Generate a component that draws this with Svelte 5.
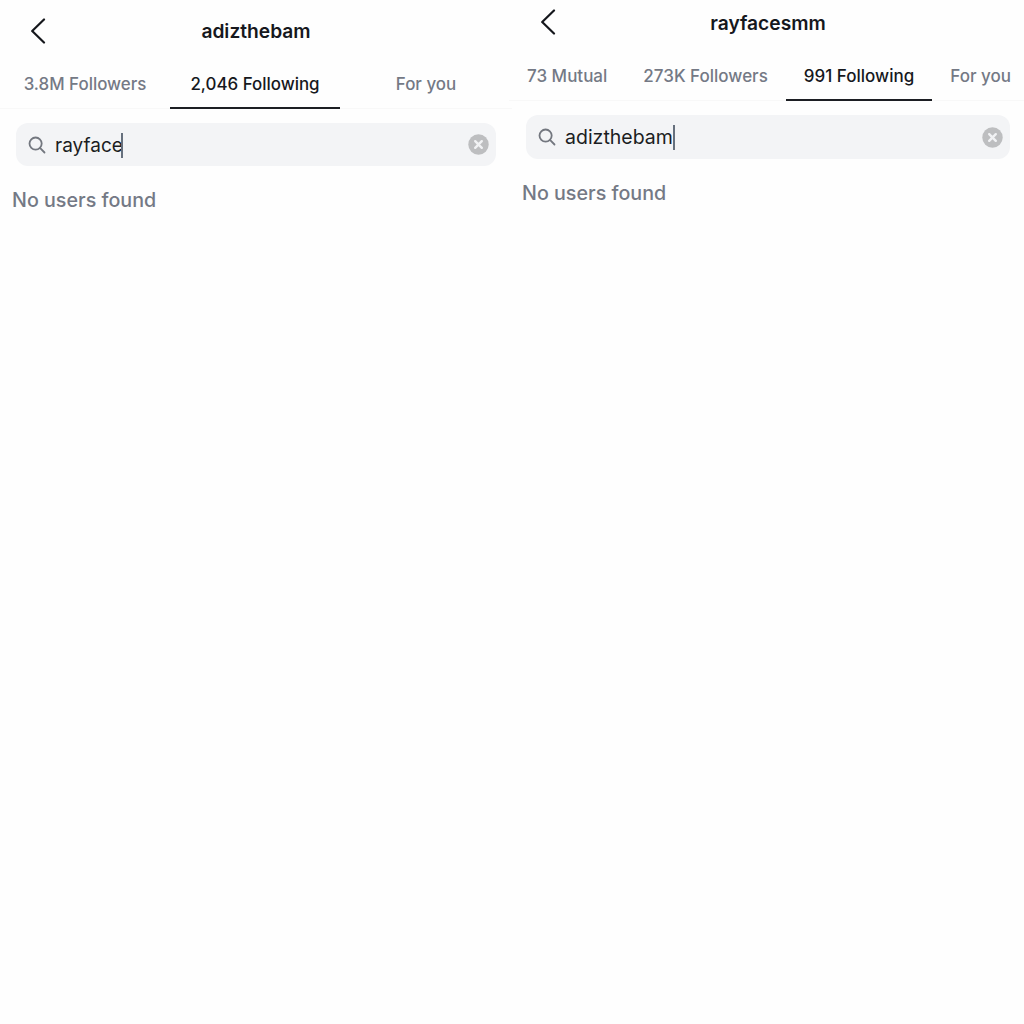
<script>
  const panels = [
    {
      name: "adizthebam",
      query: "rayface",
      kind: "left",
      tabs: [
        { label: "3.8M Followers" },
        { label: "2,046 Following", active: true },
        { label: "For you" }
      ]
    },
    {
      name: "rayfacesmm",
      query: "adizthebam",
      kind: "right",
      tabs: [
        { label: "73 Mutual" },
        { label: "273K Followers" },
        { label: "991 Following", active: true },
        { label: "For you" }
      ]
    }
  ];
</script>

<div class="page">
  {#each panels as panel}
    <section class="panel {panel.kind}">
      <header class="top">
        <svg class="back" width="16" height="26" viewBox="0 0 16 26" fill="none" stroke="#15171c" stroke-width="2.2" stroke-linecap="round" stroke-linejoin="round">
          <path d="M14 1.5 2.2 13 14 24.5" />
        </svg>
        <h1>{panel.name}</h1>
      </header>

      <nav class="tabs">
        {#each panel.tabs as tab}
          <div class="tab" class:active={tab.active}>{tab.label}</div>
        {/each}
      </nav>

      <div class="search">
        <svg width="18" height="18" viewBox="0 0 18 18" fill="none" stroke="#73777f" stroke-width="1.8" stroke-linecap="round">
          <circle cx="7.6" cy="7.6" r="6.1" />
          <path d="m12.2 12.2 4.3 4.3" />
        </svg>
        <div class="query">{panel.query}<span class="caret"></span></div>
        <svg class="clear" width="21" height="21" viewBox="0 0 21 21">
          <circle cx="10.5" cy="10.5" r="10.2" fill="#bdbec0" />
          <path d="m7.2 7.2 6.6 6.6M13.8 7.2l-6.6 6.6" stroke="#f1f2f4" stroke-width="2.4" stroke-linecap="round" />
        </svg>
      </div>

      <p class="empty">No users found</p>
    </section>
  {/each}
</div>

<style>
  :global(body) {
    background: #fff;
  }

  .page {
    display: grid;
    grid-template-columns: 512px 512px;
    width: 1024px;
    height: 1024px;
    overflow: hidden;
    font-family: Inter, "Liberation Sans", sans-serif;
    background: #fefefe;
  }

  .panel {
    min-width: 0;
  }

  .left {
    padding-top: 13px;
  }

  .right {
    padding-top: 5px;
  }

  .top {
    position: relative;
    display: flex;
    align-items: center;
    justify-content: center;
    height: 36px;
  }

  .back {
    position: absolute;
    top: 5px;
  }

  .left .back {
    left: 30px;
  }

  .right .back {
    left: 28px;
    top: 4px;
  }

  h1 {
    margin: 0;
    font-size: 19.2px;
    font-weight: 600;
    color: #16181d;
  }

  .tabs {
    display: flex;
    height: 60px;
    border-bottom: 1px solid #f8f8f8;
    box-sizing: border-box;
  }

  .tab {
    display: flex;
    align-items: center;
    justify-content: center;
    box-sizing: border-box;
    padding-top: 12px;
    font-size: 16.9px;
    font-weight: 500;
    white-space: nowrap;
    color: #747985;
    border-bottom: 2px solid transparent;
    margin-bottom: -1px;
  }

  .tab.active {
    color: #16181d;
    border-bottom-color: #1c1e23;
  }

  .left .tab {
    flex: 0 0 170px;
  }

  .left .tab:last-child {
    flex-basis: 172px;
  }

  .right .tabs {
    margin-left: -3px;
    width: 540px;
  }

  .right .tab {
    padding: 11px 18px 0;
    font-size: 17px;
  }

  .search {
    display: flex;
    align-items: center;
    height: 43px;
    margin-top: 14px;
    padding: 0 7px 0 12px;
    border-radius: 12px;
    background: #f3f4f6;
  }

  .left .search {
    margin-left: 16px;
    margin-right: 16px;
  }

  .right .search {
    margin-left: 14px;
    margin-right: 14px;
    height: 44px;
  }

  .query {
    display: flex;
    align-items: center;
    flex: 1;
    margin-left: 9px;
    font-size: 19.5px;
    color: #1b1d22;
  }

  .left .query {
    font-size: 19px;
    padding-top: 1px;
  }

  .left .caret {
    margin-left: -1.5px;
  }

  .caret {
    width: 2px;
    height: 25px;
    background: #66707d;
  }

  .empty {
    margin: 22px 0 0 12px;
    font-size: 19.7px;
    line-height: 24px;
    font-weight: 500;
    color: #747985;
  }

  .right .empty {
    margin-left: 10px;
  }
</style>
